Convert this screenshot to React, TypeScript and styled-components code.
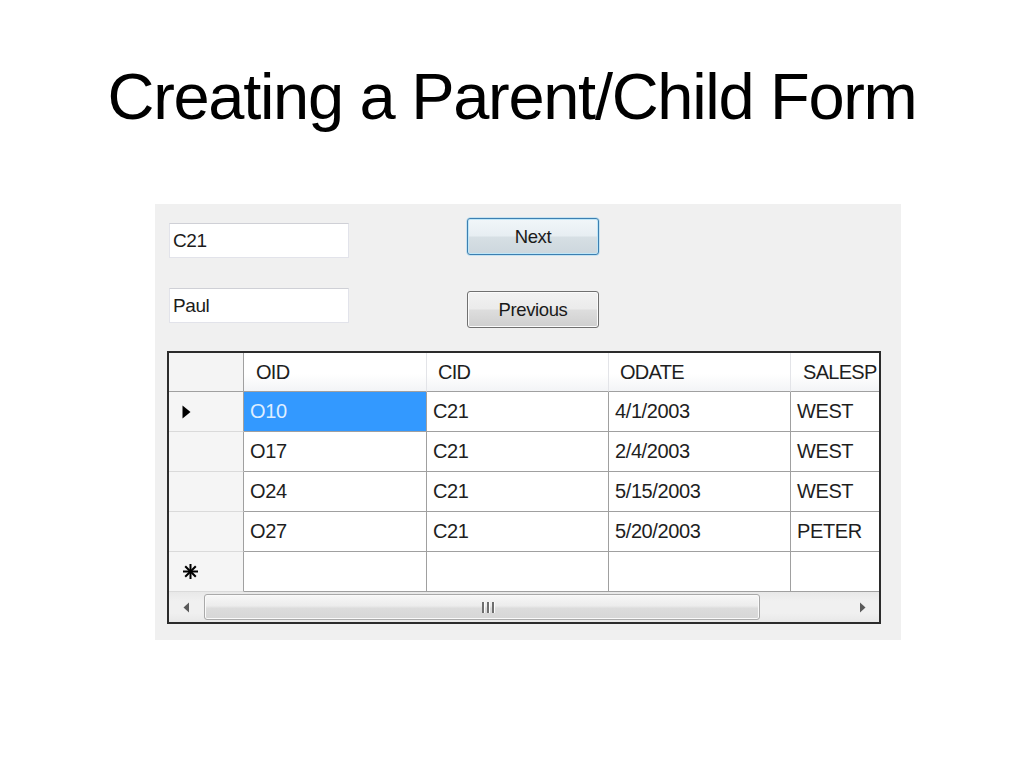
import React from "react";
import styled, { createGlobalStyle } from "styled-components";

const GlobalStyle = createGlobalStyle`
  html, body { margin: 0; padding: 0; background: #ffffff; }
  body { font-family: "Liberation Sans", Arial, sans-serif; }
  * { box-sizing: border-box; }
`;

const Page = styled.div`
  width: 1024px;
  height: 768px;
  background: #ffffff;
  overflow: hidden;
`;

const Title = styled.h1`
  margin: 0;
  padding-top: 64px;
  font-family: "Liberation Sans", Arial, sans-serif;
  font-weight: normal;
  font-size: 65px;
  line-height: 65px;
  letter-spacing: -1.3px;
  color: #000000;
  text-align: center;
  white-space: nowrap;
`;

const Panel = styled.div`
  margin: 75px 0 0 155px;
  width: 746px;
  height: 436px;
  background: #f0f0f0;
  padding: 14px 0 0 14px;
`;

const Controls = styled.div`
  display: grid;
  grid-template-columns: 180px 132px;
  column-gap: 118px;
  row-gap: 30px;
  align-items: start;
`;

const TextBox = styled.div<{ $offset: number }>`
  margin-top: ${(p) => p.$offset}px;
  height: 35px;
  background: #ffffff;
  border: 1px solid #e2e3ea;
  border-top-color: #cfd0d6;
  display: flex;
  align-items: center;
  padding-left: 3px;
  font-size: 19px;
  letter-spacing: -0.4px;
  color: #1c1c1c;
`;

const Button = styled.div<{ $focused?: boolean; $offset: number }>`
  margin-top: ${(p) => p.$offset}px;
  height: 37px;
  border-radius: 3px;
  border: 1px solid ${(p) => (p.$focused ? "#3c7fb1" : "#707070")};
  box-shadow: ${(p) =>
    p.$focused ? "inset 0 0 0 1px #bfe6f7, 0 0 0 0.5px #9ed4ef" : "inset 0 0 0 1px #fbfbfb"};
  background: ${(p) =>
    p.$focused
      ? "linear-gradient(#f1f6f9 0%, #e7eef2 48%, #d6dfe4 52%, #cdd7dd 100%)"
      : "linear-gradient(#f2f2f2 0%, #ebebeb 48%, #dddddd 52%, #cfcfcf 100%)"};
  display: flex;
  align-items: center;
  justify-content: center;
  padding-top: 1px;
  font-size: 18.5px;
  color: #1a1a1a;
  letter-spacing: -0.4px;
`;

const GridFrame = styled.div`
  margin: 23px 0 0 -2px;
  width: 714px;
  border: 2px solid #2b2b2b;
  background: #ffffff;
`;

const Grid = styled.div`
  display: grid;
  grid-template-columns: 75px 183px 182px 182px 88px;
  grid-template-rows: 39px repeat(5, 40px);
  overflow: hidden;
`;

const CornerCell = styled.div`
  background: #f4f4f4;
  border-right: 1px solid #a0a0a0;
  border-bottom: 1px solid #a0a0a0;
`;

const HeaderCell = styled.div<{ $pad: number; $last?: boolean }>`
  background: linear-gradient(#ffffff 0%, #ffffff 55%, #f3f4f6 100%);
  border-right: ${(p) => (p.$last ? "none" : "1px solid #e3e4e8")};
  border-bottom: 1px solid #a0a0a0;
  display: flex;
  align-items: center;
  padding-left: ${(p) => p.$pad}px;
  font-size: 20px;
  letter-spacing: -0.7px;
  color: #1e1e1e;
  white-space: nowrap;
`;

const RowHeader = styled.div`
  background: #f5f5f5;
  border-right: 1px solid #a0a0a0;
  border-bottom: 1px solid #dadada;
  display: flex;
  align-items: center;
  padding-left: 13px;
`;

const Cell = styled.div<{ $selected?: boolean; $last?: boolean }>`
  background: ${(p) => (p.$selected ? "#3399ff" : "#ffffff")};
  color: ${(p) => (p.$selected ? "#dfeeff" : "#1e1e1e")};
  border-right: ${(p) => (p.$last ? "none" : "1px solid #a0a0a0")};
  border-bottom: 1px solid #a0a0a0;
  display: flex;
  align-items: center;
  padding-left: 6px;
  font-size: 20px;
  letter-spacing: -0.4px;
  white-space: nowrap;
  overflow: hidden;
`;

const ScrollBar = styled.div`
  height: 30px;
  background: linear-gradient(#e8e8e8, #f0f0f0 30%, #f0f0f0 70%, #e8e8e8);
  display: flex;
  align-items: center;
  padding: 0 5px 0 5px;
`;

const ArrowButton = styled.div`
  width: 24px;
  height: 26px;
  display: flex;
  align-items: center;
  justify-content: center;
  flex: none;
`;

const Track = styled.div`
  flex: 1;
  height: 26px;
  display: flex;
  align-items: center;
  padding-left: 6px;
`;

const Thumb = styled.div`
  width: 556px;
  height: 26px;
  border: 1px solid #a9a9a9;
  border-radius: 3px;
  background: linear-gradient(#f7f7f7 0%, #ececec 45%, #dcdcdc 55%, #d6d6d6 100%);
  box-shadow: inset 0 0 0 1px #fafafa;
  display: flex;
  align-items: center;
  justify-content: center;
`;

const Grip = styled.div`
  display: flex;
  gap: 3px;
  margin-left: 12px;
`;

const GripLine = styled.span`
  width: 2px;
  height: 11px;
  background: #6f6f6f;
  box-shadow: 1px 0 0 #fcfcfc;
`;

const RightArrow = styled(ArrowButton)`
  margin-left: auto;
`;

type Row = { oid: string; cid: string; odate: string; sales: string };

const rows: Row[] = [
  { oid: "O10", cid: "C21", odate: "4/1/2003", sales: "WEST" },
  { oid: "O17", cid: "C21", odate: "2/4/2003", sales: "WEST" },
  { oid: "O24", cid: "C21", odate: "5/15/2003", sales: "WEST" },
  { oid: "O27", cid: "C21", odate: "5/20/2003", sales: "PETER" },
];

const CurrentArrow = () => (
  <svg width="9" height="14" viewBox="0 0 9 14">
    <path d="M0.5 0.5 L8.5 7 L0.5 13.5 Z" fill="#000" />
  </svg>
);

const NewRowStar = () => (
  <svg width="17" height="17" viewBox="0 0 17 17">
    <g stroke="#000" strokeWidth="2" strokeLinecap="butt">
      <line x1="8.5" y1="1" x2="8.5" y2="16" />
      <line x1="1" y1="8.5" x2="16" y2="8.5" />
      <line x1="3.2" y1="3.2" x2="13.8" y2="13.8" />
      <line x1="13.8" y1="3.2" x2="3.2" y2="13.8" />
    </g>
  </svg>
);

const Tri = ({ dir }: { dir: "left" | "right" }) => (
  <svg width="7" height="11" viewBox="0 0 7 11">
    <path d={dir === "left" ? "M6 0.5 L0.5 5.5 L6 10.5 Z" : "M1 0.5 L6.5 5.5 L1 10.5 Z"} fill="#5a5a5a" />
  </svg>
);

export default function App() {
  return (
    <Page>
      <GlobalStyle />
      <Title>Creating a Parent/Child Form</Title>
      <Panel>
        <Controls>
          <TextBox $offset={5}>C21</TextBox>
          <Button $focused $offset={0}>Next</Button>
          <TextBox $offset={0}>Paul</TextBox>
          <Button $offset={3}>Previous</Button>
        </Controls>
        <GridFrame>
          <Grid>
            <CornerCell />
            <HeaderCell $pad={12}>OID</HeaderCell>
            <HeaderCell $pad={11}>CID</HeaderCell>
            <HeaderCell $pad={11}>ODATE</HeaderCell>
            <HeaderCell $pad={12} $last>SALESP</HeaderCell>
            {rows.map((r, i) => (
              <React.Fragment key={r.oid}>
                <RowHeader>{i === 0 ? <CurrentArrow /> : null}</RowHeader>
                <Cell $selected={i === 0}>{r.oid}</Cell>
                <Cell>{r.cid}</Cell>
                <Cell>{r.odate}</Cell>
                <Cell $last>{r.sales}</Cell>
              </React.Fragment>
            ))}
            <RowHeader>
              <NewRowStar />
            </RowHeader>
            <Cell />
            <Cell />
            <Cell />
            <Cell $last />
          </Grid>
          <ScrollBar>
            <ArrowButton>
              <Tri dir="left" />
            </ArrowButton>
            <Track>
              <Thumb>
                <Grip>
                  <GripLine />
                  <GripLine />
                  <GripLine />
                </Grip>
              </Thumb>
            </Track>
            <RightArrow>
              <Tri dir="right" />
            </RightArrow>
          </ScrollBar>
        </GridFrame>
      </Panel>
    </Page>
  );
}
